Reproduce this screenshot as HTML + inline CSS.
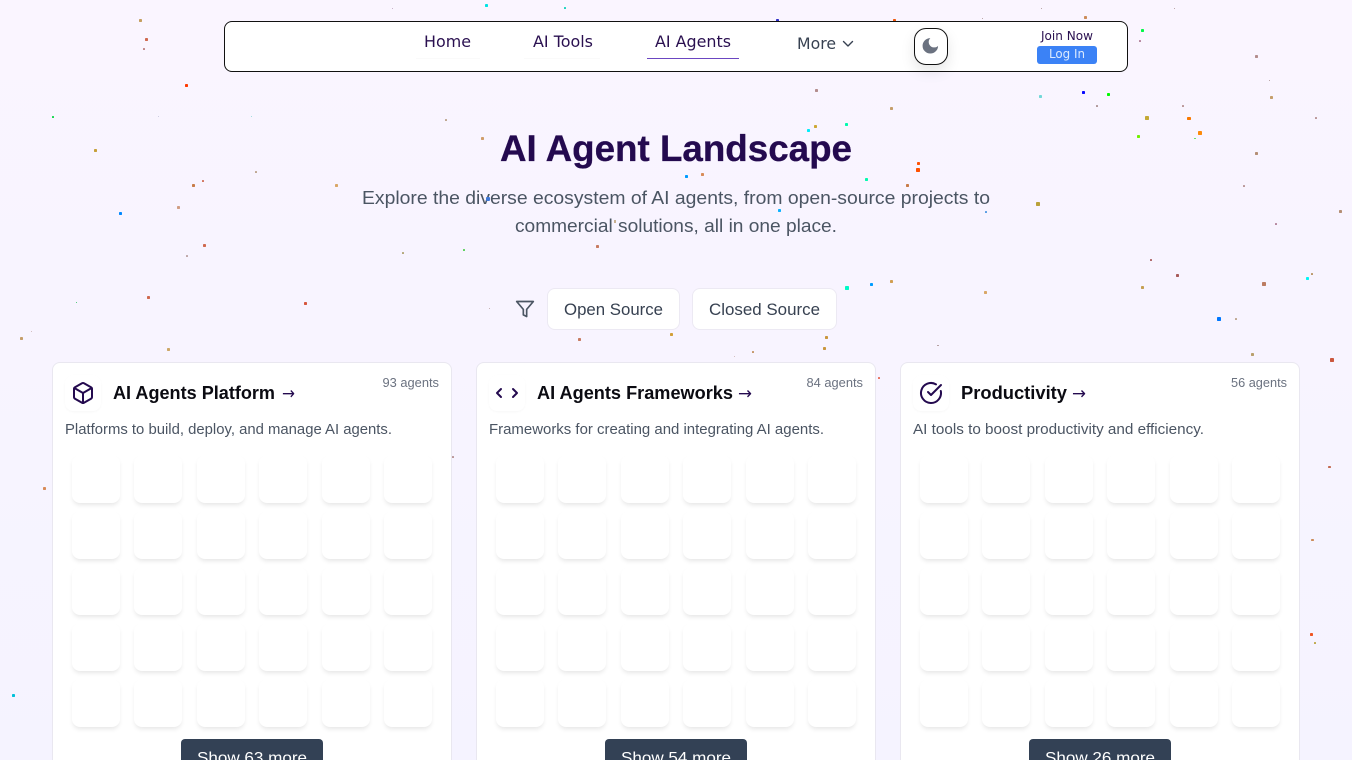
<!DOCTYPE html>
<html lang="en"><head><meta charset="utf-8"><title>AI Agent Landscape</title>
<style>
*{box-sizing:border-box}
html,body{margin:0;padding:0;width:1352px;height:760px;overflow:hidden}
body{background:linear-gradient(180deg,#faf5ff 0%,#f5f3ff 100%);position:relative;font-family:"Liberation Sans",sans-serif}
svg{position:absolute;left:0;top:0;overflow:visible}
.layer{position:absolute;left:0;top:0;width:1352px;height:760px}
.dots{filter:saturate(1.6)}
.dots rect{rx:.8px}
.abs{position:absolute}
.nav{left:224px;top:21px;width:904px;height:51px;background:#fff;border:1px solid #111;border-radius:8px}
.moon{left:914px;top:28px;width:34px;height:37px;background:#fff;border:1px solid #111;border-radius:12px;box-shadow:0 6px 14px rgba(0,0,0,.1)}
.login{left:1037px;top:46px;width:60px;height:18px;background:#3b82f6;border-radius:3px}
.pill{top:288px;height:42px;background:#fff;border:1px solid #ece9f3;border-radius:8px}
.card{top:362px;width:400px;height:420px;background:#fff;border:1px solid #e9e7f0;border-radius:8px}
.ibox{left:12px;top:12px;width:36px;height:36px;border-radius:8px;background:#fff;box-shadow:0 1px 2px rgba(0,0,0,.03)}
.grid{position:absolute;left:19px;top:92px;width:360px;display:grid;grid-template-columns:repeat(6,48px);column-gap:14.4px;row-gap:8px}
.grid div{height:48px;background:#fff;border-radius:8px;box-shadow:0 3px 5px -1px rgba(0,0,0,.1)}
.btn{left:128px;top:376px;width:142px;height:50px;background:#334155;border-radius:4px}
</style></head><body>
<svg class="layer dots" width="1352" height="760" viewBox="0 0 1352 760">
<g>
<rect x="139" y="19" width="3" height="3" fill="#b8a078"/><rect x="145" y="38" width="3" height="3" fill="#b07060"/><rect x="143" y="48" width="2" height="2" fill="#a88080"/><rect x="185" y="84" width="3" height="3" fill="#e04a1a"/><rect x="52" y="116" width="2" height="2" fill="#3ac060"/><rect x="94" y="149" width="3" height="3" fill="#b8a060"/><rect x="202" y="180" width="2" height="2" fill="#b07060"/><rect x="192" y="184" width="3" height="3" fill="#b08060"/><rect x="177" y="206" width="3" height="3" fill="#c0a090"/><rect x="119" y="212" width="3" height="3" fill="#2a80d0"/><rect x="203" y="244" width="3" height="3" fill="#b07060"/><rect x="186" y="255" width="2" height="2" fill="#b0a0a0"/><rect x="76" y="302" width="1" height="1" fill="#50b070"/><rect x="147" y="296" width="3" height="3" fill="#b07060"/><rect x="304" y="302" width="3" height="3" fill="#b06050"/><rect x="20" y="337" width="3" height="3" fill="#b8a080"/><rect x="31" y="331" width="1" height="1" fill="#c0b0b0"/><rect x="167" y="348" width="3" height="3" fill="#c0a880"/><rect x="335" y="184" width="3" height="3" fill="#c8a880"/><rect x="255" y="171" width="2" height="2" fill="#b0a090"/><rect x="445" y="119" width="2" height="2" fill="#b0a090"/><rect x="402" y="252" width="2" height="2" fill="#a8a080"/><rect x="158" y="116" width="1" height="1" fill="#c0c0d0"/><rect x="251" y="116" width="1" height="1" fill="#a0d0d0"/>
<rect x="893" y="19" width="3" height="3" fill="#c06030"/><rect x="982" y="18" width="1" height="1" fill="#a09090"/><rect x="1041" y="8" width="1" height="1" fill="#a09090"/><rect x="1084" y="16" width="3" height="3" fill="#b89070"/><rect x="1174" y="8" width="1" height="1" fill="#a09090"/><rect x="1141" y="29" width="3" height="3" fill="#40e070"/><rect x="1139" y="40" width="2" height="2" fill="#a08090"/><rect x="1255" y="55" width="3" height="3" fill="#a89090"/><rect x="1269" y="80" width="1" height="1" fill="#a09090"/><rect x="1270" y="96" width="3" height="3" fill="#b8a080"/><rect x="1315" y="117" width="2" height="2" fill="#a89090"/><rect x="890" y="107" width="3" height="3" fill="#b8a080"/><rect x="1039" y="95" width="3" height="3" fill="#90d0d0"/><rect x="1082" y="91" width="3" height="3" fill="#1010d0"/><rect x="1107" y="93" width="3" height="3" fill="#40e040"/><rect x="1096" y="105" width="2" height="2" fill="#a09090"/><rect x="1145" y="116" width="4" height="4" fill="#b8a860"/><rect x="1182" y="105" width="2" height="2" fill="#a89090"/><rect x="1187" y="117" width="4" height="3" fill="#d08030"/><rect x="1198" y="131" width="4" height="4" fill="#d89040"/><rect x="1137" y="135" width="3" height="3" fill="#90e040"/><rect x="1194" y="138" width="2" height="1" fill="#70d070"/><rect x="1255" y="152" width="3" height="3" fill="#a89080"/><rect x="1243" y="185" width="2" height="2" fill="#a89090"/><rect x="1339" y="210" width="3" height="3" fill="#a89080"/><rect x="1275" y="223" width="2" height="2" fill="#a08090"/><rect x="917" y="162" width="3" height="3" fill="#e06030"/><rect x="916" y="168" width="4" height="4" fill="#f06010"/><rect x="906" y="184" width="3" height="3" fill="#b08060"/><rect x="1036" y="202" width="4" height="4" fill="#b0a060"/><rect x="985" y="211" width="2" height="2" fill="#6090c0"/><rect x="1150" y="259" width="2" height="2" fill="#906060"/><rect x="1176" y="274" width="3" height="3" fill="#906060"/><rect x="1141" y="286" width="3" height="3" fill="#b8a070"/><rect x="984" y="291" width="3" height="3" fill="#c8a880"/><rect x="1262" y="282" width="4" height="4" fill="#a88070"/><rect x="1306" y="277" width="3" height="3" fill="#30e0e0"/><rect x="1311" y="273" width="2" height="2" fill="#a89070"/><rect x="1217" y="317" width="4" height="4" fill="#1070e0"/><rect x="1235" y="318" width="2" height="2" fill="#b0a090"/><rect x="937" y="345" width="2" height="1" fill="#a09090"/><rect x="1251" y="353" width="3" height="3" fill="#b0a080"/><rect x="1330" y="358" width="4" height="4" fill="#a86050"/>
<rect x="815" y="89" width="3" height="3" fill="#a89090"/><rect x="807" y="129" width="3" height="3" fill="#30d8e0"/><rect x="814" y="125" width="3" height="3" fill="#c0a860"/><rect x="845" y="123" width="3" height="3" fill="#20e0b0"/><rect x="865" y="178" width="3" height="3" fill="#20e0b0"/><rect x="685" y="175" width="3" height="3" fill="#2090e0"/><rect x="701" y="173" width="3" height="3" fill="#c09070"/><rect x="481" y="137" width="3" height="3" fill="#c0a080"/><rect x="778" y="209" width="3" height="3" fill="#40a8f0"/><rect x="596" y="245" width="3" height="3" fill="#b08070"/><rect x="463" y="249" width="2" height="2" fill="#70c070"/><rect x="845" y="286" width="4" height="4" fill="#20e0c0"/><rect x="870" y="283" width="3" height="3" fill="#2090d0"/><rect x="890" y="280" width="3" height="3" fill="#c0a070"/><rect x="489" y="308" width="1" height="1" fill="#b0a0a0"/><rect x="670" y="333" width="3" height="3" fill="#c0a060"/><rect x="578" y="338" width="3" height="3" fill="#b08070"/><rect x="825" y="336" width="3" height="3" fill="#b89860"/><rect x="823" y="347" width="3" height="3" fill="#b89860"/><rect x="752" y="351" width="2" height="2" fill="#b09070"/><rect x="734" y="356" width="1" height="1" fill="#c0b0b0"/>
<rect x="776" y="19" width="3" height="3" fill="#303090"/><rect x="485" y="4" width="3" height="3" fill="#30d0d0"/><rect x="564" y="7" width="2" height="2" fill="#40c0b0"/><rect x="392" y="8" width="1" height="1" fill="#b0a0b0"/><rect x="452" y="456" width="2" height="2" fill="#a89090"/><rect x="43" y="487" width="3" height="3" fill="#c09070"/><rect x="12" y="694" width="3" height="3" fill="#30b0c0"/><rect x="1328" y="466" width="3" height="2" fill="#a87060"/><rect x="1311" y="539" width="3" height="2" fill="#b89070"/><rect x="1310" y="633" width="3" height="3" fill="#c06040"/><rect x="1314" y="642" width="2" height="2" fill="#b0a060"/><rect x="878" y="377" width="2" height="2" fill="#c07060"/>
</g>
</svg>

<div class="abs nav"></div>
<div class="abs" style="left:416px;top:58px;width:64px;height:1px;background:#fafafa"></div>
<div class="abs" style="left:524px;top:58px;width:76px;height:1px;background:#fafafa"></div>
<div class="abs" style="left:647px;top:58px;width:92px;height:1px;background:#6b46c1"></div>
<div class="abs moon"></div>
<div class="abs login"></div>

<div class="abs pill" style="left:547px;width:133px"></div>
<div class="abs pill" style="left:692px;width:145px"></div>

<div class="abs card" style="left:52px"><div class="abs ibox"></div><div class="grid"><div></div><div></div><div></div><div></div><div></div><div></div><div></div><div></div><div></div><div></div><div></div><div></div><div></div><div></div><div></div><div></div><div></div><div></div><div></div><div></div><div></div><div></div><div></div><div></div><div></div><div></div><div></div><div></div><div></div><div></div></div><div class="abs btn"></div></div>
<div class="abs card" style="left:476px"><div class="abs ibox"></div><div class="grid"><div></div><div></div><div></div><div></div><div></div><div></div><div></div><div></div><div></div><div></div><div></div><div></div><div></div><div></div><div></div><div></div><div></div><div></div><div></div><div></div><div></div><div></div><div></div><div></div><div></div><div></div><div></div><div></div><div></div><div></div></div><div class="abs btn"></div></div>
<div class="abs card" style="left:900px"><div class="abs ibox"></div><div class="grid"><div></div><div></div><div></div><div></div><div></div><div></div><div></div><div></div><div></div><div></div><div></div><div></div><div></div><div></div><div></div><div></div><div></div><div></div><div></div><div></div><div></div><div></div><div></div><div></div><div></div><div></div><div></div><div></div><div></div><div></div></div><div class="abs btn"></div></div>

<svg class="layer" width="1352" height="760" viewBox="0 0 1352 760" font-family="'Liberation Sans',sans-serif">
<g font-family="'DejaVu Sans',sans-serif" font-size="16" fill="#2a1050">
<text x="424" y="47" textLength="47" lengthAdjust="spacingAndGlyphs">Home</text>
<text x="533" y="47" textLength="60" lengthAdjust="spacingAndGlyphs">AI Tools</text>
<text x="655" y="47" textLength="76" lengthAdjust="spacingAndGlyphs">AI Agents</text>
<text x="797" y="49" textLength="39" lengthAdjust="spacingAndGlyphs" fill="#374151">More</text>
<text x="1041" y="40" font-size="12" textLength="52" lengthAdjust="spacingAndGlyphs">Join Now</text>
<text x="1049" y="58" font-size="12" textLength="36" lengthAdjust="spacingAndGlyphs" fill="#dbeafe">Log In</text>
</g>
<path d="M843.500 41.500 848 46 852.500 41.500" fill="none" stroke="#374151" stroke-width="1.400" stroke-linecap="round" stroke-linejoin="round"/>
<g transform="translate(920 35.500) scale(.86)"><path d="M12 3a6 6 0 0 0 9 9 9 9 0 1 1-9-9Z" fill="#6b7280"/></g>

<text x="500" y="161" font-size="37" font-weight="700" fill="#240a4f" stroke="#240a4f" stroke-width=".3" textLength="352" lengthAdjust="spacingAndGlyphs">AI Agent Landscape</text>
<g font-size="18.500" fill="#4b5563">
<text x="362" y="204" textLength="628" lengthAdjust="spacingAndGlyphs">Explore the diverse ecosystem of AI agents, from open-source projects to</text>
<text x="515" y="232" textLength="322" lengthAdjust="spacingAndGlyphs">commercial solutions, all in one place.</text>
</g>
<rect x="486" y="197" width="4" height="4" rx="1" fill="#3f78d8"/>
<rect x="614" y="220" width="2" height="3" fill="#c8b090"/>

<g transform="translate(515 299)" fill="none" stroke="#4b5563" stroke-width="2" stroke-linecap="round" stroke-linejoin="round"><g transform="scale(.8333)"><polygon points="22 3 2 3 10 12.460 10 19 14 21 14 12.460 22 3"/></g></g>
<g font-size="16.500" fill="#374151">
<text x="564" y="315" textLength="99" lengthAdjust="spacingAndGlyphs">Open Source</text>
<text x="709" y="315" textLength="111" lengthAdjust="spacingAndGlyphs">Closed Source</text>
</g>

<g fill="none" stroke="#240a4f" stroke-width="2" stroke-linecap="round" stroke-linejoin="round">
<g transform="translate(71 381)"><path d="M21 8a2 2 0 0 0-1-1.730l-7-4a2 2 0 0 0-2 0l-7 4A2 2 0 0 0 3 8v8a2 2 0 0 0 1 1.730l7 4a2 2 0 0 0 2 0l7-4A2 2 0 0 0 21 16Z"/><path d="m3.300 7 8.700 5 8.700-5"/><path d="M12 22V12"/></g>
<g transform="translate(495 381)"><path d="m18 16 4-4-4-4"/><path d="m6 8-4 4 4 4"/></g>
<g transform="translate(919 381)"><path d="M21.801 10A10 10 0 1 1 17 3.335"/><path d="m9 11 3 3L22 4"/></g>
</g>

<g font-size="18.500" font-weight="700" fill="#0b0b12">
<text x="113" y="399" textLength="162" lengthAdjust="spacingAndGlyphs">AI Agents Platform</text>
<text x="537" y="399" textLength="196" lengthAdjust="spacingAndGlyphs">AI Agents Frameworks</text>
<text x="961" y="399" textLength="106" lengthAdjust="spacingAndGlyphs">Productivity</text>
</g>
<g font-size="17" fill="#240a4f" font-family="'DejaVu Sans',sans-serif">
<text x="282" y="399" textLength="13" lengthAdjust="spacingAndGlyphs">→</text>
<text x="738" y="399" textLength="14" lengthAdjust="spacingAndGlyphs">→</text>
<text x="1072" y="399" textLength="14" lengthAdjust="spacingAndGlyphs">→</text>
</g>
<g font-size="12.500" fill="#6b7280">
<text x="382.500" y="387" textLength="56.500" lengthAdjust="spacingAndGlyphs">93 agents</text>
<text x="806.500" y="387" textLength="56.500" lengthAdjust="spacingAndGlyphs">84 agents</text>
<text x="1231" y="387" textLength="56" lengthAdjust="spacingAndGlyphs">56 agents</text>
</g>
<g font-size="14.500" fill="#4b5563">
<text x="65" y="434" textLength="327" lengthAdjust="spacingAndGlyphs">Platforms to build, deploy, and manage AI agents.</text>
<text x="489" y="434" textLength="335" lengthAdjust="spacingAndGlyphs">Frameworks for creating and integrating AI agents.</text>
<text x="913" y="434" textLength="291" lengthAdjust="spacingAndGlyphs">AI tools to boost productivity and efficiency.</text>
</g>
<g font-size="16" fill="#fff">
<text x="197" y="763" textLength="110" lengthAdjust="spacingAndGlyphs">Show 63 more</text>
<text x="621" y="763" textLength="110" lengthAdjust="spacingAndGlyphs">Show 54 more</text>
<text x="1045" y="763" textLength="110" lengthAdjust="spacingAndGlyphs">Show 26 more</text>
</g>
</svg>
</body></html>
